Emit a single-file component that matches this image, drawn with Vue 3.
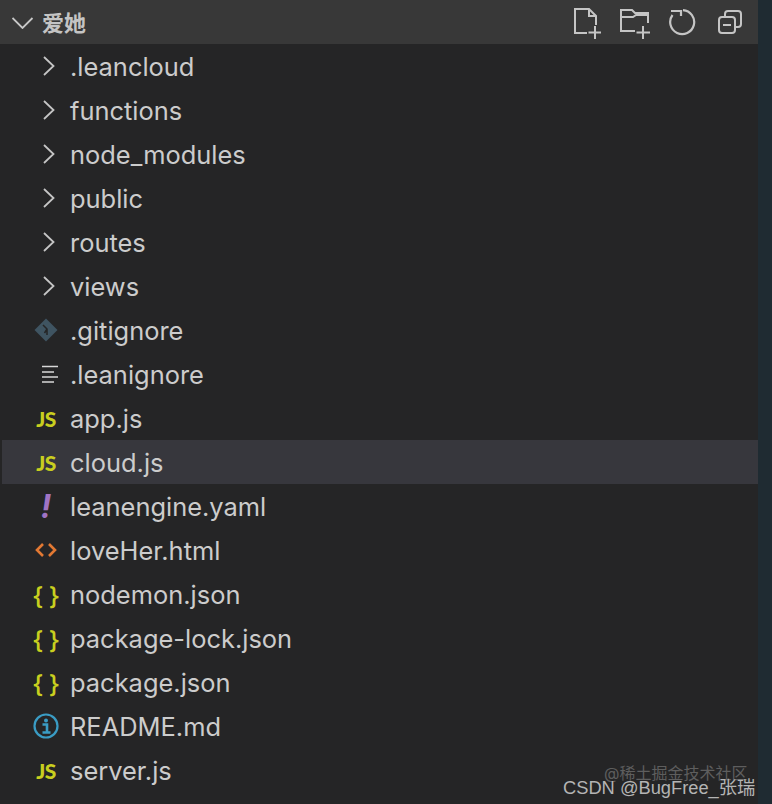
<script setup>
const rows = [
  { name: '.leancloud', icon: 'chev' },
  { name: 'functions', icon: 'chev' },
  { name: 'node_modules', icon: 'chev' },
  { name: 'public', icon: 'chev' },
  { name: 'routes', icon: 'chev' },
  { name: 'views', icon: 'chev' },
  { name: '.gitignore', icon: 'git' },
  { name: '.leanignore', icon: 'lines' },
  { name: 'app.js', icon: 'js' },
  { name: 'cloud.js', icon: 'js', active: true },
  { name: 'leanengine.yaml', icon: 'yaml' },
  { name: 'loveHer.html', icon: 'html' },
  { name: 'nodemon.json', icon: 'json' },
  { name: 'package-lock.json', icon: 'json' },
  { name: 'package.json', icon: 'json' },
  { name: 'README.md', icon: 'info' },
  { name: 'server.js', icon: 'js' },
]
</script>

<template>
  <div class="page">
    <div class="panel">
      <header class="head">
        <svg class="head-chev" width="22" height="14" viewBox="0 0 22 14" fill="none"><path d="M.5 3l10 10 10-10" stroke="#c8c8c8" stroke-width="1.8"/></svg>
        <span class="title">爱她</span>
        <div class="actions">
          <svg width="27" height="40" viewBox="0 0 27 40" fill="none" stroke="#c5c5c5" stroke-width="2"><path d="M13 31H1V7h14l7 7v9M15 7v7h7"/><path d="M21 24v13M14.500 30.500h12.500"/></svg>
          <svg width="30" height="40" viewBox="0 0 30 40" fill="none" stroke="#c5c5c5" stroke-width="2"><path d="M15 29H1V8h11l3 3h13v10M1 15h12l3-2h12"/><path d="M23 24v13M16.500 30.500H30"/></svg>
          <svg width="30" height="40" viewBox="0 0 30 40" fill="none" stroke="#c5c5c5" stroke-width="2.200"><path d="M14 8.100A12 12 0 1 1 3.500 13"/><path d="M2 9h10v5"/></svg>
          <svg width="24" height="24" viewBox="0 0 24 24" fill="none" stroke="#c5c5c5" stroke-width="2"><rect x="7" y="1" width="16" height="16" rx="3"/><rect x="1" y="7" width="16" height="16" rx="3" fill="#383838"/><path d="M5 15h8"/></svg>
        </div>
      </header>
      <div v-for="row in rows" :key="row.name" class="row" :class="{ active: row.active }">
        <span class="icon">
          <svg v-if="row.icon === 'chev'" class="i-chev" width="14" height="22" viewBox="0 0 14 22" fill="none"><path d="M2 2l9.500 9L2 20" stroke="#c5c5c5" stroke-width="1.800"/></svg>
          <svg v-else-if="row.icon === 'git'" width="24" height="24" viewBox="0 0 24 24"><path d="M12 .5 23.500 12 12 23.500.5 12Z" fill="#3f5461"/><path d="M9 7l4 4v6M13 11l-2.500 4" stroke="#252526" stroke-width="1.500" fill="none"/></svg>
          <svg v-else-if="row.icon === 'lines'" class="i-lines" width="17" height="18" viewBox="0 0 17 18" fill="none" stroke="#d8d8d8" stroke-width="1.700"><path d="M1 1.500h16M1 7h12M1 12h16M1 17h12"/></svg>
          <b v-else-if="row.icon === 'js'" class="js">JS</b>
          <b v-else-if="row.icon === 'yaml'" class="yaml">!</b>
          <svg v-else-if="row.icon === 'html'" width="22" height="16" viewBox="0 0 22 16" fill="none" stroke="#e37933" stroke-width="2.600"><path d="M8 2 2 8l6 6M14 2l6 6-6 6"/></svg>
          <b v-else-if="row.icon === 'json'" class="json">{ }</b>
          <svg v-else width="26" height="26" viewBox="0 0 26 26" fill="none"><circle cx="13" cy="13" r="11.500" stroke="#3a9cc4" stroke-width="2.200"/><circle cx="13" cy="7.500" r="2" fill="#3a9cc4"/><path d="M9.500 11.500H14v7.500M9.500 19.500h8" stroke="#3a9cc4" stroke-width="2.600"/></svg>
        </span>
        <span class="name">{{ row.name }}</span>
      </div>
    </div>
    <div class="strip"></div>
    <span class="mark-juejin">@稀土掘金技术社区</span>
    <span class="mark-csdn">CSDN @BugFree_张瑞</span>
  </div>
</template>

<style scoped>
.page {
  position: relative;
  width: 772px;
  height: 804px;
  display: flex;
  overflow: hidden;
  background: #252526;
  font-family: Inter, "Noto Sans CJK SC", sans-serif;
}
.panel {
  width: 756px;
  margin-left: 2px;
  background: #252526;
}
.strip {
  flex: 1;
  background: #1f2b32;
}
.head {
  display: flex;
  align-items: center;
  height: 44px;
  margin-left: -2px;
  padding-left: 12px;
  background: #383838;
}
.head-chev {
  margin-right: 8px;
}
.title {
  padding-bottom: 2px;
  font-size: 22px;
  font-weight: 700;
  color: #c4c4c4;
}
.actions {
  display: flex;
  align-items: center;
  gap: 19px;
  margin-left: auto;
  padding-right: 16px;
}
.row {
  display: flex;
  align-items: center;
  height: 44px;
  color: #cccccc;
}
.row.active {
  background: #37373d;
}
.icon {
  display: flex;
  align-items: center;
  justify-content: center;
  width: 28px;
  margin-left: 30px;
  margin-right: 10px;
  height: 44px;
}
.i-chev {
  margin-left: 6px;
}
.i-lines {
  margin-left: 6px;
}
.name {
  padding-top: 2px;
  font-size: 25.450px;
  line-height: 42px;
  white-space: nowrap;
}
.js {
  color: #c9cf1f;
  font-family: Lato, sans-serif;
  font-size: 21px;
  font-weight: 900;
  letter-spacing: -0.500px;
}
.yaml {
  color: #a074c4;
  font-size: 32px;
  font-style: italic;
  font-weight: 700;
}
.json {
  color: #c9cf1f;
  font-family: "Open Sans", sans-serif;
  font-size: 25px;
  font-weight: 600;
  word-spacing: 0;
  white-space: pre;
}
.mark-juejin {
  position: absolute;
  left: 604px;
  top: 760px;
  font-size: 16px;
  color: #5e5e5e;
  white-space: nowrap;
}
.mark-csdn {
  position: absolute;
  left: 563px;
  top: 773px;
  font-family: "Liberation Sans", "Noto Sans CJK SC", sans-serif;
  font-size: 18.300px;
  color: #b4b4b4;
  white-space: nowrap;
}
</style>
